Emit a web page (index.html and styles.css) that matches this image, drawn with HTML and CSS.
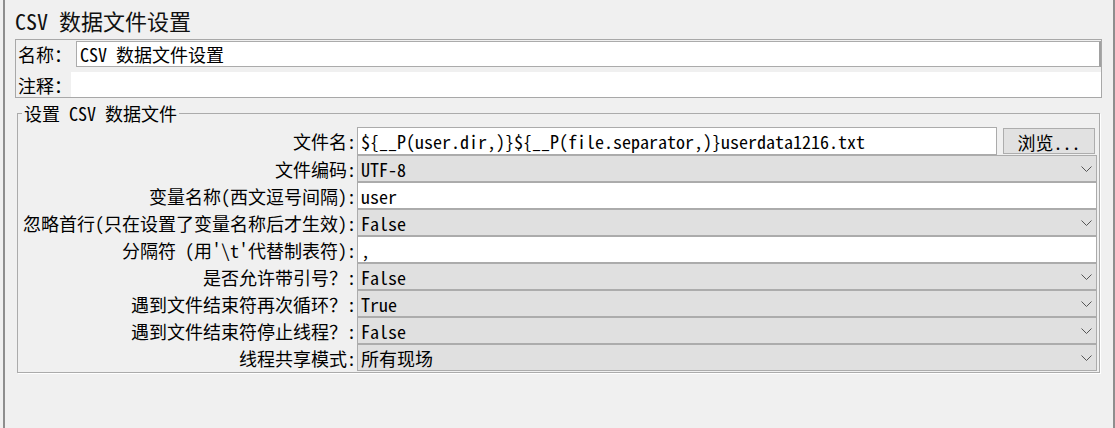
FILE: index.html
```html
<!DOCTYPE html>
<html lang="zh-CN">
<head>
<meta charset="utf-8">
<title>CSV 数据文件设置</title>
<link rel="stylesheet" href="styles.css">
</head>
<body>
<div class="panel">
  <h1 class="title">CSV 数据文件设置</h1>
  <div class="namebox">
    <div class="nrow nrow-name">
      <span class="nlabel">名称：</span>
      <div class="text-field name-field">CSV 数据文件设置</div>
    </div>
    <div class="nrow nrow-comment">
      <span class="nlabel">注释：</span>
      <div class="comment-area"></div>
    </div>
  </div>
  <fieldset class="group">
    <legend class="group-title">设置 CSV 数据文件</legend>
    <div class="form">
      <span class="flabel">文件名:</span>
      <div class="file-control">
        <div class="text-field file-field">${__P(user.dir,)}${__P(file.separator,)}userdata1216.txt</div>
        <button class="browse" type="button">浏览...</button>
      </div>

      <span class="flabel">文件编码:</span>
      <div class="select"><span>UTF-8</span><svg class="chev" width="11" height="6" viewBox="0 0 11 6"><polyline points="0.5,0.5 5.5,5.5 10.5,0.5"/></svg></div>

      <span class="flabel">变量名称(西文逗号间隔):</span>
      <div class="text-field">user</div>

      <span class="flabel">忽略首行(只在设置了变量名称后才生效):</span>
      <div class="select"><span>False</span><svg class="chev" width="11" height="6" viewBox="0 0 11 6"><polyline points="0.5,0.5 5.5,5.5 10.5,0.5"/></svg></div>

      <span class="flabel">分隔符 (用'\t'代替制表符):</span>
      <div class="text-field">,</div>

      <span class="flabel">是否允许带引号？:</span>
      <div class="select"><span>False</span><svg class="chev" width="11" height="6" viewBox="0 0 11 6"><polyline points="0.5,0.5 5.5,5.5 10.5,0.5"/></svg></div>

      <span class="flabel">遇到文件结束符再次循环？:</span>
      <div class="select"><span>True</span><svg class="chev" width="11" height="6" viewBox="0 0 11 6"><polyline points="0.5,0.5 5.5,5.5 10.5,0.5"/></svg></div>

      <span class="flabel">遇到文件结束符停止线程？:</span>
      <div class="select"><span>False</span><svg class="chev" width="11" height="6" viewBox="0 0 11 6"><polyline points="0.5,0.5 5.5,5.5 10.5,0.5"/></svg></div>

      <span class="flabel">线程共享模式:</span>
      <div class="select"><span>所有现场</span><svg class="chev" width="11" height="6" viewBox="0 0 11 6"><polyline points="0.5,0.5 5.5,5.5 10.5,0.5"/></svg></div>
    </div>
  </fieldset>
</div>
</body>
</html>
```

FILE: styles.css
```css
* { box-sizing: border-box; }

html, body {
  margin: 0;
  padding: 0;
}

body {
  background: #f0f0f0;
  font-family: "Noto Sans Mono CJK SC", "Noto Sans CJK SC", sans-serif;
  font-size: 18px;
  color: #000;
  overflow: hidden;
}

.panel {
  margin-left: 3px;
  width: 1112px;
  height: 428px;
  border-left: 2px solid #8e8e8e;
  border-right: 2px solid #8e8e8e;
}

.title {
  margin: 0;
  height: 39px;
  padding: 6px 0 0 10px;
  font-size: 22px;
  font-weight: normal;
  line-height: 28px;
  color: #111;
  white-space: nowrap;
}

.namebox {
  margin: 0 11px 0 10px;
  border: 1px solid #a8a8a8;
  height: 59px;
}

.nrow {
  display: flex;
  align-items: center;
}

.nrow-name {
  margin-top: 1px;
  height: 26px;
}

.nrow-comment {
  margin-top: 5px;
  height: 25px;
}

.nlabel {
  width: 55px;
  padding-left: 2px;
  white-space: nowrap;
  line-height: 22px;
}

.text-field {
  background: #fff;
  border: 1px solid #ababab;
  display: flex;
  align-items: center;
  padding-left: 3px;
  white-space: nowrap;
  overflow: hidden;
}

.name-field {
  flex: 1;
  height: 26px;
  margin-left: 5px;
  border-right: 2px solid #a0a0a0;
}

.comment-area {
  flex: 1;
  height: 25px;
  background: #fff;
}

.group {
  margin: 4px 13px 0 12px;
  padding: 0 2px 0 0;
  border: 1px solid #ababab;
  box-shadow: 1px 1px 0 #fff;
  min-width: 0;
}

.group-title {
  margin-left: 4px;
  padding: 0 2px;
  font-size: 18px;
  line-height: 22px;
  white-space: nowrap;
}

.form {
  margin-top: 3px;
  display: grid;
  grid-template-columns: 338px 1fr;
  grid-template-rows: 28px repeat(8, 27px);
  column-gap: 1px;
  padding-bottom: 1px;
}

.flabel {
  align-self: center;
  text-align: right;
  white-space: nowrap;
  line-height: 22px;
}

.file-control {
  display: flex;
  gap: 6px;
}

.file-field {
  flex: 1;
  height: 28px;
}

.browse {
  width: 92px;
  height: 26px;
  margin: 1px 2px 0 0;
  padding: 0;
  background: #e1e1e1;
  border: 1px solid #adadad;
  font-family: inherit;
  font-size: 18px;
  color: #000;
}

.select {
  background: #e0e0e0;
  border: 1px solid #acacac;
  display: flex;
  align-items: center;
  justify-content: space-between;
  padding: 0 4px 0 3px;
  white-space: nowrap;
}

.chev {
  display: block;
}

.chev polyline {
  fill: none;
  stroke: #555;
  stroke-width: 1;
}
```
